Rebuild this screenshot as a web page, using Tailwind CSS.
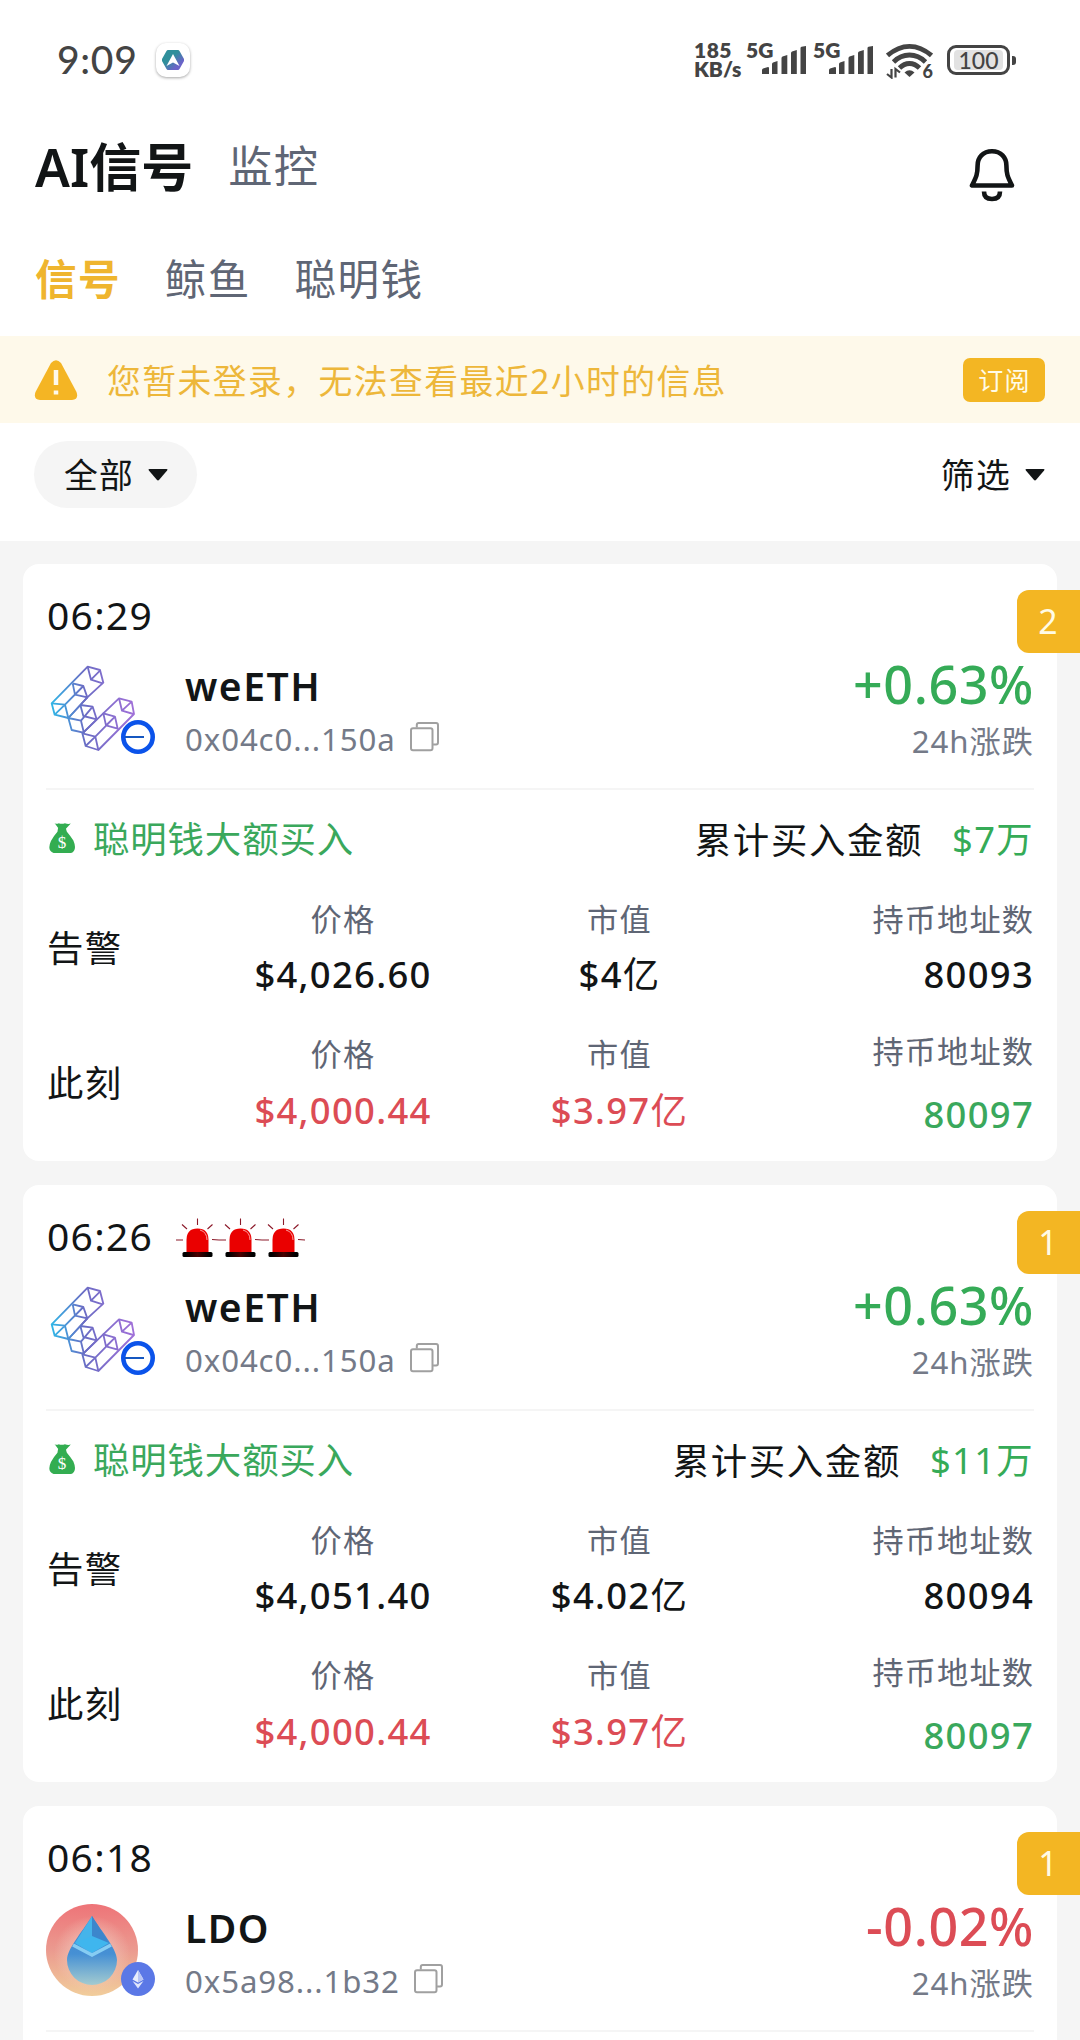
<!DOCTYPE html>
<html lang="zh-CN">
<head>
  <meta charset="UTF-8" />
  <meta name="viewport" content="width=device-width, initial-scale=1.0"/>
  <title>AI信号</title>
  <script src="https://cdn.jsdelivr.net/npm/@tailwindcss/browser@4"></script>
</head>
<body class="bg-[#f5f5f5] w-[1080px] h-[2040px] overflow-hidden font-['Noto_Sans','Noto_Sans_CJK_SC',sans-serif] tracking-[1.3px] text-[#121516]">

  <!-- Shared icons -->
  <svg class="absolute size-0">
    <defs>
      <linearGradient id="etherfi" gradientUnits="userSpaceOnUse" x1="95" y1="450" x2="342" y2="440">
        <stop offset="0" stop-color="#2fb5e6"/>
        <stop offset="0.4" stop-color="#6a6cc4"/>
        <stop offset="1" stop-color="#a070d8"/>
      </linearGradient>
      <linearGradient id="ldoBg" x1="0" y1="0" x2="0" y2="1">
        <stop offset="0" stop-color="#ee7478"/>
        <stop offset="0.5" stop-color="#eb9a8f"/>
        <stop offset="1" stop-color="#f1cd9b"/>
      </linearGradient>
      <radialGradient id="ldoGlow" cx="0.5" cy="0.5" r="0.5">
        <stop offset="0.4" stop-color="#f3d0c4" stop-opacity="0.6"/>
        <stop offset="1" stop-color="#f3d0c4" stop-opacity="0"/>
      </radialGradient>
      <linearGradient id="ldoDrop" x1="0" y1="0" x2="0" y2="1">
        <stop offset="0" stop-color="#3f86cf"/>
        <stop offset="0.55" stop-color="#4690d4"/>
        <stop offset="1" stop-color="#a3cbd0"/>
      </linearGradient>
      <linearGradient id="appHex" x1="0" y1="0" x2="1" y2="1">
        <stop offset="0.4" stop-color="#2f8f9b"/>
        <stop offset="0.75" stop-color="#6a63c8"/>
      </linearGradient>
      <linearGradient id="sirenBase" x1="0" y1="0" x2="1" y2="0">
        <stop offset="0.1" stop-color="#000"/>
        <stop offset="0.5" stop-color="#4a0000"/>
        <stop offset="0.9" stop-color="#000"/>
      </linearGradient>
    </defs>
    <symbol id="icon-signal" viewBox="0 0 44 28">
      <path d="M0 28v-4q0-1 1-1.500l5-1.500q1 0 1 1v6zM10 28V18q0-1 1-1.500l4.500-1.500v13zM19.500 28V12q0-1 1-1.500l4.800-1.500v19zM29 28V7q0-1 1-1.500l4.800-1.500v24zM38.500 28V2q0-1 1-1.300L44 0v28z" fill="#444"/>
    </symbol>
    <symbol id="icon-caret" viewBox="0 0 20 12">
      <path d="M1.500 0h17q1.600 0 .6 1.400L11.200 10.800q-1.200 1.300-2.400 0L.9 1.400Q-.1 0 1.500 0z" fill="currentColor"/>
    </symbol>
    <symbol id="icon-copy" viewBox="0 0 29 30">
      <rect x="1" y="6.300" width="21.500" height="22" rx="2" fill="none" stroke="#a0a0a0" stroke-width="2"/>
      <path d="M6.800 5.500V2.900q0-1.900 1.900-1.900h17.400q1.900 0 1.900 1.900v17.400q0 2.200-1.900 2.200h-3" fill="none" stroke="#a0a0a0" stroke-width="2"/>
    </symbol>
    <symbol id="icon-bag" viewBox="86 787 80 97">
      <path d="M103 789q6 5 13 1q9 4 19 0q10 4 18 1l-15 16q-12 3-22 0zM114 805h24q1 7 3 11q12 14 20 27q5 12 5 20q0 14-12 19H100q-13-5-13-18q0-8 5-19q8-16 20-29q1-5 2-11z" fill="#33ad51"/>
    </symbol>
    <symbol id="icon-weeth" viewBox="78 306 276 276">
      <g fill="none" stroke="url(#etherfi)" stroke-width="5.500" stroke-linejoin="round">
        <path d="M203 320L240 330L250 368L202 412L145 474L104 464L95 430Z"/>
        <path d="M203 320L213 359L248 370M213 359L240 332M158 370L165 404L202 412L190 378L158 370M190 378L135 434L95 430M135 434L145 474M135 434L104 464M190 378L165 404"/>
        <path d="M202 412L181 435L218 440L230 478L190 518L155 510L145 474L183 482L218 440M183 482L192 520M181 435L190 468L230 478M145 474L181 435"/>
        <path d="M297 415L335 425L342 462L235 570L197 558L187 520Z"/>
        <path d="M297 415L306 452L340 462M306 452L335 425M285 470L250 460L258 496L293 506L285 470L226 530L187 520M226 530L235 570M226 530L197 558M285 470L258 496"/>
      </g>
    </symbol>
    <symbol id="icon-ldo" viewBox="0 0 92 92">
      <circle cx="46" cy="46" r="46" fill="url(#ldoBg)"/>
      <circle cx="46" cy="50" r="38" fill="url(#ldoGlow)"/>
      <path d="M46 12C52 23 71 44 71 56A25 25 0 0 1 21 56C21 44 40 23 46 12z" fill="url(#ldoDrop)"/>
      <path d="M46 12L29 39L46 49z" fill="#45b4ea"/>
      <path d="M46 12L63 39L46 49z" fill="#3c86cc"/>
      <path d="M29 39L46 32L63 39L46 49z" fill="#3fb6ee"/>
      <path d="M27 41L46 51L65 41" fill="none" stroke="#86cdf3" stroke-width="3.500"/>
    </symbol>
    <symbol id="icon-base" viewBox="0 0 34 34">
      <circle cx="17" cy="17" r="14.700" fill="#fff" stroke="#0b53ea" stroke-width="4.600"/>
      <path d="M4 17h19" stroke="#1557c0" stroke-width="2"/>
    </symbol>
    <symbol id="icon-eth" viewBox="0 0 34 34">
      <circle cx="17" cy="17" r="17" fill="#5b78e6"/>
      <path d="M17 8l-5.500 9.500L17 20.500l5.500-3z" fill="#e8edfc"/>
      <path d="M17 8v12.500l5.500-3z" fill="#b9c6f5"/>
      <path d="M11.500 19L17 26.500 22.500 19 17 22z" fill="#dfe6fb"/>
    </symbol>
    <symbol id="icon-siren" viewBox="0 0 43 40">
      <path d="M10.500 34V22q0-11.500 11-11.500T32.500 22v12z" fill="#ea0000"/>
      <path d="M24 12q7 2 7 10" fill="none" stroke="#ffb0b0" stroke-width="0.900"/>
      <rect x="6.500" y="34" width="30" height="5" rx="1.500" fill="url(#sirenBase)"/>
      <path d="M21.500 0.500V7M6 6.500l5 4.500M36.500 6.500l-5 4.500M0 22h7M36 21.500l7 .5" stroke="#8c1a2a" stroke-width="1.100"/>
    </symbol>
  </svg>

  <div class="bg-white h-[541px]">

    <!-- Status bar -->
    <div class="flex h-[120px] items-start pl-[57px] pr-[64px] font-[Lato,sans-serif] tracking-normal text-[#444]">
      <div class="mt-[36px] text-[39px] leading-[46px] font-medium tracking-[0.700px]">9:09</div>
      <div class="ml-[18px] mt-[43px] size-[34px] rounded-[10px] bg-white shadow-[0_1px_3px_rgba(0,0,0,0.35)] flex items-center justify-center">
        <svg class="w-[22px] h-[20px]" viewBox="0 0 22 20">
          <path d="M6 0h10q1 0 1.500 1L22 9q.4 1 0 2l-4.500 8q-.5 1-1.500 1H6q-1 0-1.500-1L0 11q-.4-1 0-2l4.500-8Q5 0 6 0z" fill="url(#appHex)"/>
          <path d="M11 4l6.500 12L11 12.500 4.500 16z" fill="#fff"/>
        </svg>
      </div>
      <div class="ml-auto mt-[40px] w-[52px] text-[21px] leading-[19px] font-extrabold">
        <div class="tracking-[0.500px]">185</div>
        <div>KB/s</div>
      </div>
      <div class="flex w-[67px] items-start">
        <div class="mt-[38px] w-[16px] text-[21px] leading-[24px] font-extrabold">5G</div>
        <svg class="mt-[46px] w-[44px] h-[28px]"><use href="#icon-signal"/></svg>
      </div>
      <div class="flex w-[73px] items-start">
        <div class="mt-[38px] w-[16px] text-[21px] leading-[24px] font-extrabold">5G</div>
        <svg class="mt-[46px] w-[44px] h-[28px]"><use href="#icon-signal"/></svg>
      </div>
      <svg class="mt-[43px] w-[47px] h-[36px]" viewBox="0 0 47 36">
        <g fill="none" stroke="#444" stroke-width="4.800">
          <path d="M1.500 12.500Q12 3.300 23.500 3.300T45.500 12.500"/>
          <path d="M7.500 19Q14.500 12 23.500 12T39.500 19"/>
          <path d="M13.500 25Q18 20.500 23.500 20.500T33.500 25"/>
        </g>
        <path d="M18.500 29.500q5-4.500 10 0l-5 4.500z" fill="#444"/>
        <path d="M5.500 26v8.500L1 31M9.500 34.500V26l4.500 3.500" fill="none" stroke="#444" stroke-width="2.200"/>
        <text x="36.500" y="35" font-size="18" font-weight="900" fill="#444">6</text>
      </svg>
      <div class="ml-[14px] mt-[45px] flex h-[30px] w-[63px] items-center justify-center rounded-[9px] border-[3px] border-[#444]">
        <div class="h-[20px] w-[49px] rounded-[4px] bg-[#e2e2e2] text-center text-[23px] leading-[20px] font-medium">100</div>
      </div>
      <div class="ml-[2px] mt-[56px] h-[9px] w-[4px] rounded-r-[3px] bg-[#444]"></div>
    </div>

    <!-- Title -->
    <div class="flex h-[96px] items-start pl-[35px] pr-[65px]">
      <div class="mt-[17px] text-[52px] leading-[60px] font-semibold tracking-[0px]">AI信号</div>
      <div class="ml-[35px] mt-[16px] text-[44.200px] leading-[60px] text-[#5f6675]">监控</div>
      <svg class="ml-auto mt-[28px] w-[46px] h-[54px]" viewBox="0 0 46 54">
        <path d="M23 3.300C14 3.300 8.600 9.500 8.600 17.500C8.600 26 7.500 28.500 3 37.500H43C38.500 28.500 37.400 26 37.400 17.500C37.400 9.500 32 3.300 23 3.300z" fill="none" stroke="#121516" stroke-width="4.600" stroke-linejoin="round"/>
        <path d="M15 43.500q0 7.500 8 7.500t8-7.500" fill="none" stroke="#121516" stroke-width="4.600"/>
      </svg>
    </div>

    <!-- Tabs -->
    <div class="flex h-[120px] items-center pt-[5px] pl-[35px] gap-[44px] text-[41.600px] leading-[60px] text-[#5f6675]">
      <div class="font-semibold text-[#efb52e]">信号</div>
      <div>鲸鱼</div>
      <div>聪明钱</div>
    </div>

    <!-- Login notice -->
    <div class="flex h-[87px] items-center bg-[#fef9ea] pl-[34px] pr-[35px]">
      <svg class="w-[44px] h-[40px]" viewBox="0 0 44 40">
        <path d="M17 3Q22-2.500 27 3L42.500 32Q45 39.500 38 40H6Q-1 39.500 1.500 32z" fill="#f4b524"/>
        <path d="M22 10v15M22 30.500v4" stroke="#fef9ea" stroke-width="4.500"/>
      </svg>
      <div class="ml-[29px] mt-[2px] text-[33.800px] leading-[48px] tracking-[1.450px] text-[#edb73a]">您暂未登录，无法查看最近2小时的信息</div>
      <div class="ml-auto h-[44px] w-[82px] rounded-[7px] bg-[#f3b623] pl-px text-center text-[25px] leading-[44px] text-[#fffbe6]">订阅</div>
    </div>

    <!-- Filters -->
    <div class="flex items-center justify-between pl-[34px] pr-[35px] pt-[18px] text-[33.800px]">
      <div class="flex h-[67px] w-[163px] items-center gap-[14px] rounded-full bg-[#f5f5f5] pl-[30px]">
        <div class="leading-[48px]">全部</div>
        <svg class="w-[20px] h-[12px]"><use href="#icon-caret"/></svg>
      </div>
      <div class="flex items-center gap-[14px]">
        <div class="leading-[48px]">筛选</div>
        <svg class="w-[20px] h-[12px]"><use href="#icon-caret"/></svg>
      </div>
    </div>
  </div>

  <!-- Signal list -->
  <div id="signalList" class="flex flex-col gap-[24px] pt-[23px] px-[23px]"></div>

  <script>
    const green = 'text-[#35ab57]';
    const red = 'text-[#dc4c55]';

    const signals = [
      {
        time: '06:29', count: 2, sirens: 0, name: 'weETH', address: '0x04c0...150a',
        logo: 'icon-weeth', chain: 'icon-base', change: '+0.63%', changeColor: green, total: '$7万',
        alert: ['$4,026.60', '$4', '80093'], now: ['$4,000.44', '$3.97', '80097']
      },
      {
        time: '06:26', count: 1, sirens: 3, name: 'weETH', address: '0x04c0...150a',
        logo: 'icon-weeth', chain: 'icon-base', change: '+0.63%', changeColor: green, total: '$11万',
        alert: ['$4,051.40', '$4.02', '80094'], now: ['$4,000.44', '$3.97', '80097']
      },
      {
        time: '06:18', count: 1, sirens: 0, name: 'LDO', address: '0x5a98...1b32',
        logo: 'icon-ldo', chain: 'icon-eth', change: '-0.02%', changeColor: red
      }
    ];

    // One row of stats: price, market cap, holders
    function statsRow(title, values, isNow) {
      const valueClass = isNow ? `mt-[11px] ${red}` : 'mt-[10px]';
      return `
        <div class="grid h-[135px] grid-cols-[159px_276px_277px_1fr] text-[36.400px] leading-[48px]">
          <div class="pl-px pt-[37px]">${title}</div>
          <div class="pt-[11px] text-center">
            <div class="text-[31.200px] leading-[42px] text-[#5f6675]">价格</div>
            <div class="font-medium ${valueClass}">${values[0]}</div>
          </div>
          <div class="pt-[11px] text-center">
            <div class="text-[31.200px] leading-[42px] text-[#5f6675]">市值</div>
            <div class="font-medium ${valueClass}">${values[1]}<span class="font-normal">亿</span></div>
          </div>
          <div class="${isNow ? 'pt-[8px]' : 'pt-[11px]'} text-right">
            <div class="text-[31.200px] leading-[42px] tracking-[1.100px] text-[#5f6675]">持币地址数</div>
            <div class="font-medium ${isNow ? 'mt-[18px] text-[#3aa85c]' : 'mt-[10px]'}">${values[2]}</div>
          </div>
        </div>`;
    }

    function details(s) {
      return `
        <div class="flex h-[97px] items-center text-[36.400px] leading-[48px]">
          <div class="relative ml-[3px] -mt-[2px] w-[26px] h-[32px]">
            <svg class="w-[26px] h-[32px]"><use href="#icon-bag"/></svg>
            <span class="absolute inset-x-0 top-[11px] text-center font-['Liberation_Serif',serif] text-[17px] leading-[20px] tracking-normal text-white">$</span>
          </div>
          <div class="ml-[18px] tracking-[0.900px] text-[#3aa85c]">聪明钱大额买入</div>
          <div class="ml-auto mt-[3px] tracking-[1.650px]">累计买入金额</div>
          <div class="ml-[29px] ${green}">${s.total}</div>
        </div>
        ${statsRow('告警', s.alert, false)}
        ${statsRow('此刻', s.now, true)}`;
    }

    const siren = '<svg class="w-[43px] h-[40px]"><use href="#icon-siren"/></svg>';

    document.getElementById('signalList').innerHTML = signals.map(s => `
      <div class="relative h-[597px] shrink-0 rounded-[16px] bg-white px-[23px] pt-[26px]">
        <div class="absolute top-[26px] -right-[23px] h-[63px] w-[63px] rounded-l-[12px] bg-[#f3b623] text-center text-[33.800px] leading-[63px] text-[#fffbe6]">${s.count}</div>
        <div class="flex h-[51px] items-center pl-px text-[39px]">
          ${s.time}
          <div class="ml-[23px] mt-[2px] flex">${siren.repeat(s.sirens)}</div>
        </div>
        <div class="mt-[21px] flex h-[128px] border-b-2 border-[#f5f5f5]">
          <div class="relative size-[92px]">
            <svg class="size-[92px]"><use href="#${s.logo}"/></svg>
            <svg class="absolute left-[75px] top-[58px] size-[34px]"><use href="#${s.chain}"/></svg>
          </div>
          <div class="ml-[47px]">
            <div class="text-[39px] leading-[48px] font-semibold tracking-[1.500px]">${s.name}</div>
            <div class="mt-[12px] flex items-center gap-[14px] text-[31.200px] leading-[34px] tracking-[0.900px] text-[#747a88]">
              ${s.address}
              <svg class="w-[29px] h-[30px] -mt-[4px]"><use href="#icon-copy"/></svg>
            </div>
          </div>
          <div class="ml-auto text-right">
            <div class="text-[52px] leading-[44px] font-medium tracking-[0.600px] ${s.changeColor}">${s.change}</div>
            <div class="mt-[18px] text-[31.200px] leading-[34px] tracking-[1px] text-[#747a88]">24h涨跌</div>
          </div>
        </div>
        ${s.total ? details(s) : ''}
      </div>`).join('');
  </script>

</body>
</html>
